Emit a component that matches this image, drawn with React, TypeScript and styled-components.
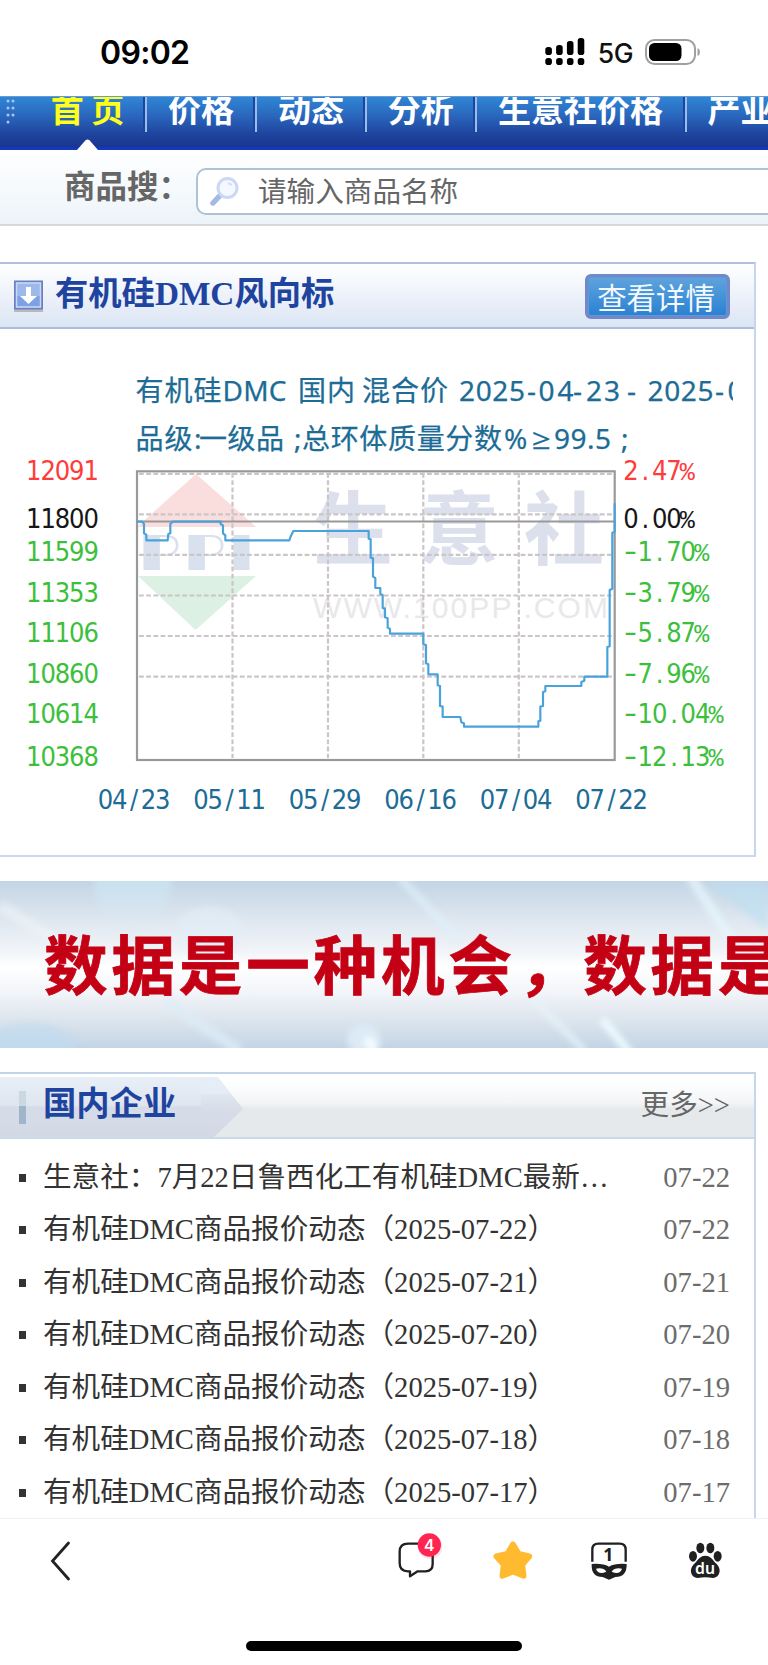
import React from "react";
import styled, { createGlobalStyle } from "styled-components";

const cjk = `"Noto Sans CJK SC", sans-serif`;
const serif = `"Liberation Serif", ${cjk}`;

const GlobalStyle = createGlobalStyle`
  * { box-sizing: border-box; }
  body { margin: 0; background: #fff; font-family: ${cjk}; }
  ul { margin: 0; padding: 0; list-style: none; }
  h2 { margin: 0; }
  svg { display: block; }
`;

const Screen = styled.div`
  width: 768px;
  height: 1665px;
  display: flex;
  flex-direction: column;
  overflow: hidden;
  background: #fff;
`;

const StatusBar = styled.header`
  flex: none;
  height: 96px;
  padding: 8px 67px 0 100px;
  display: flex;
  align-items: center;
`;

const Clock = styled.span`
  flex: 1;
  margin-top: 2px;
  font: 600 32px/40px Inter, sans-serif;
  letter-spacing: -0.7px;
  color: #000;
`;

const Network = styled.span`
  margin: 2px 12px 0 13px;
  font: 500 26.5px/34px Inter, sans-serif;
  letter-spacing: -0.5px;
  color: #111;
`;

const NavBar = styled.nav`
  flex: none;
  position: relative;
  height: 54px;
  display: flex;
  overflow: hidden;
  background: linear-gradient(#2f86d6 0%, #2a67bd 35%, #1f469f 68%, #1a358f 94%, #1238c4 96%);
  border-top: 1px solid #6a9bd0;
`;

const Grip = styled.svg`
  flex: none;
  width: 30px;
  height: 53px;
`;

const NavItem = styled.a<{ $width: number; $active?: boolean }>`
  flex: none;
  width: ${(p) => p.$width}px;
  height: 35px;
  border-right: 2px solid #9cbce6;
  box-shadow: inset -2px 0 0 #1746a8;
  text-align: center;
  white-space: nowrap;
  font: 700 33px/40px ${cjk};
  color: ${(p) => (p.$active ? "#ffff1a" : "#fff")};

  span {
    display: block;
    margin-top: -9px;
  }
`;

const ActiveMark = styled.svg`
  position: absolute;
  left: 77px;
  bottom: 0;
`;

const SearchBar = styled.section`
  flex: none;
  height: 76px;
  display: flex;
  align-items: flex-start;
  padding: 18px 0 0 64px;
  overflow: hidden;
  background: linear-gradient(#fff, #ecf4f9);
  border-bottom: 2px solid #d6d9db;
`;

const SearchLabel = styled.label`
  flex: none;
  width: 132px;
  margin-top: -2px;
  white-space: nowrap;
  font: 700 31.5px/36px ${cjk};
  color: #666;
`;

const SearchField = styled.div`
  flex: none;
  width: 600px;
  height: 47px;
  display: flex;
  align-items: center;
  padding-left: 11px;
  gap: 19px;
  border: 2px solid #aec2d6;
  border-radius: 10px;
  background: #fff;
  font: 400 28.6px/40px ${cjk};
  color: #666;

  span {
    margin-top: -4px;
  }
`;

const Card = styled.section<{ $height: number; $top: number; $line: string }>`
  flex: none;
  width: 756px;
  height: ${(p) => p.$height}px;
  margin-top: ${(p) => p.$top}px;
  border-top: 2px solid ${(p) => p.$line};
  border-right: 2px solid #c8d5ee;
`;

const ChartCard = styled(Card)`
  border-bottom: 2px solid #ccd8ee;
`;

const CardHead = styled.div<{ $tone: "blue" | "grey" }>`
  position: relative;
  height: 65px;
  display: flex;
  align-items: center;
  padding-right: 24px;
  border-bottom: 2px solid ${(p) => (p.$tone === "blue" ? "#a9bedb" : "#cbdaea")};
  background: ${(p) =>
    p.$tone === "blue"
      ? "linear-gradient(#fff, #edf2fa 50%, #dbe5f4)"
      : "linear-gradient(#fff 10%, #f3f5f7 45%, #e6e9ec 56%, #e5e9ec)"};
`;

const CardIcon = styled.span`
  margin: 2px 11px 0 14px;
`;

const CardTitle = styled.h2<{ $left: number }>`
  position: relative;
  flex: 1;
  padding-left: ${(p) => p.$left}px;
  margin-top: -3px;
  font: 700 33.3px/44px ${serif};
  color: #1f449f;
`;

const DetailButton = styled.button`
  width: 145px;
  height: 45px;
  margin-top: 1px;
  padding: 0 3px 0 0;
  border: 3px solid #7288c8;
  border-radius: 6px;
  background: linear-gradient(#60a3dc, #4493d8 50%, #2a80d0);
  box-shadow: inset 0 0 0 1px #5a9ada;
  font: 400 29.4px/33px ${cjk};
  white-space: nowrap;
  color: #f4f9ff;
`;

const Banner = styled.section`
  flex: none;
  position: relative;
  height: 167px;
  margin-top: 24px;
  overflow: hidden;
  background: linear-gradient(#c3d5e5, #dde6ef 22%, #f1f4f8 42%, #fff 51%, #f3f5f9 66%, #dde5ed 83%, #c3d5e5);
`;

const BannerLights = styled.svg`
  position: absolute;
  inset: 0;
`;

const BannerText = styled.div`
  position: relative;
  padding: 35px 0 0 44px;
  font: 700 63.5px/90px ${cjk};
  letter-spacing: 3.9px;
  white-space: nowrap;
  color: #c40014;
  -webkit-text-stroke: 0.8px #c40014;
`;

const Comma = styled.span`
  display: inline-block;
  transform: translateX(6px) skewX(-8deg);
`;

const TitleArrow = styled.svg`
  position: absolute;
  left: 0;
  top: 0;
`;

const More = styled.a`
  margin-top: 1px;
  font: 400 28.6px/40px ${serif};
  color: #666;
`;

const NewsList = styled.ul`
  padding: 12.5px 24px 0 19px;
`;

const NewsRow = styled.li`
  height: 52.5px;
  display: flex;
  align-items: center;
  font: 400 28.6px/52px ${serif};
  white-space: nowrap;

  &::before {
    content: "";
    width: 7px;
    height: 8px;
    margin-right: 17px;
    background: #333;
  }
`;

const NewsTitle = styled.span`
  flex: 1;
  color: #333;
`;

const NewsDate = styled.time`
  color: #6c6c6c;
`;

const BottomBar = styled.footer`
  flex: none;
  position: relative;
  height: 147px;
  padding: 12px 37px 0 35px;
  display: flex;
  justify-content: space-between;
  align-items: flex-start;
  border-top: 1px solid #f0f0f0;
  background: #fff;
`;

const ToolGroup = styled.div`
  display: flex;
  gap: 46.5px;

  svg:first-child {
    margin-right: -3px;
  }
`;

const HomeIndicator = styled.div`
  position: absolute;
  left: 246px;
  bottom: 14px;
  width: 276px;
  height: 10px;
  border-radius: 5px;
  background: #000;
`;

const Content = styled.main`
  flex: none;
  height: 1422px;
  display: flex;
  flex-direction: column;
  overflow: hidden;
`;

const STEP = 14.33;
const spread = (start: number, text: string) =>
  Array.from(text).map((_, i) => (start + i * STEP).toFixed(2)).join(" ");

const Cells = styled.text`
  font: 27px "DejaVu Sans Condensed", "DejaVu Sans", sans-serif;
  font-stretch: condensed;
  text-anchor: middle;
`;

function CellText({ x, y, fill, text }: { x: number; y: number; fill: string; text: string }) {
  const percent = text.endsWith("%");
  const negative = text.startsWith("-");
  const body = text.replace(/[-%]/g, "");
  const first = negative ? x + STEP : x;
  return (
    <>
      {negative && (
        <text x={x - 7} y={y - 1} fill={fill} fontSize="27" textLength="13" lengthAdjust="spacingAndGlyphs" fontFamily="DejaVu Sans, sans-serif">-</text>
      )}
      <Cells x={spread(first, body)} y={y} fill={fill}>{body}</Cells>
      {percent && (
        <text x={first + body.length * STEP - 1} y={y} fill={fill} fontSize="25" textAnchor="middle" fontFamily="Liberation Mono, monospace">%</text>
      )}
    </>
  );
}

const GREEN = "#3cc03c";
const levels = [
  { y: 480, price: "12091", pct: "2.47%", color: "#ff3c3c" },
  { y: 527.5, price: "11800", pct: "0.00%", color: "#161616" },
  { y: 560.5, price: "11599", pct: "-1.70%", color: GREEN },
  { y: 601.5, price: "11353", pct: "-3.79%", color: GREEN },
  { y: 642, price: "11106", pct: "-5.87%", color: GREEN },
  { y: 682.5, price: "10860", pct: "-7.96%", color: GREEN },
  { y: 723.2, price: "10614", pct: "-10.04%", color: GREEN },
  { y: 765.7, price: "10368", pct: "-12.13%", color: GREEN },
];
const days = ["04/23", "05/11", "05/29", "06/16", "07/04", "07/22"];

const captions: [string, number, number, number][] = [
  ["有机硅", 135.5, 401, 86],
  ["DMC", 222.5, 401, 64],
  ["国内", 298, 401, 57],
  ["混合价", 362, 401, 86],
  ["2025", 459, 401, 66],
  ["-", 527, 401, 10],
  ["04", 538.5, 401, 35],
  ["-", 573, 401, 10],
  ["23", 586, 401, 34],
  ["-", 627, 401, 10],
  ["2025", 647.5, 401, 66],
  ["-", 715, 401, 10],
  ["0", 727.5, 401, 17],
  ["品级", 135.5, 449, 57],
  [":", 194, 449, 8],
  ["一级品", 199, 449, 85],
  [";", 294, 449, 8],
  ["总环体质量分数", 302, 449, 200],
  ["%", 504, 449, 26],
  ["≥", 532, 449, 19],
  ["99.5", 554, 449, 57],
  [";", 621, 449, 8],
];

const Caption = styled.text`
  font: 28px "Noto Sans", "Open Sans", ${cjk};
  fill: #1c6c96;
  stroke: #1c6c96;
  stroke-width: 0.25px;
`;

function PriceChart() {
  return (
    <svg width="733" height="526" viewBox="0 329 733 526">
      <g>
        <path d="M196 474L256 527H137Z" fill="#fadddd" />
        <path d="M138 576H256L195.500 630Z" fill="#dcf1e3" />
        <g fill="#d9e0ee">
          <text x="152 197 236" y="570" fontFamily="Lato" fontWeight="300" fontSize="49">PPI</text>
          <rect x="143.500" y="535" width="16" height="35" />
          <rect x="188.500" y="535" width="16" height="35" />
          <rect x="233.500" y="535" width="16" height="35" />
        </g>
        <text x="313 419 524" y="558" fontFamily="Noto Sans CJK SC" fontWeight="700" fontSize="80" fill="#dbe0ec">生意社</text>
        <text x="313" y="618" textLength="295" fontFamily="Liberation Sans" fontSize="30" fill="#e8e8ea">WWW.100PP .COM</text>
      </g>
      <g stroke="#cbc5c7" strokeWidth="2.200" strokeDasharray="4.8 2.4" fill="none">
        {[232.5, 328, 423.3, 518.8].map((x) => <path key={x} d={`M${x} 473V758`} />)}
        {[473.8, 514.3, 554.8, 595.5, 636, 676.7].map((y) => <path key={y} d={`M139 ${y}H614`} />)}
      </g>
      <path d="M137 521.500H614.500" stroke="#999" strokeWidth="2.200" />
      <rect x="137" y="471.300" width="477.700" height="288.700" fill="none" stroke="#999" strokeWidth="2.200" />
      <g transform="translate(0 450) scale(.333333)">
        <path
          fill="none"
          stroke="#48a2dc"
          strokeWidth="6.500"
          strokeLinejoin="round"
          d="M410 215H427L432 222V250L439 254V271H503L505 252L511 250V222L518 215H662L662 222L669 226V250L676 256V271H868L871 262L880 243H1106V266L1112 268V323L1119 325V380L1126 384V414H1141V432L1148 435V474L1155 476V502L1163 505V533L1170 537V551H1270V583L1278 585V640L1285 643V673H1313V706L1320 708V768L1328 770V801H1381L1384 817L1392 820V830H1615V814L1621 812V770L1629 768V726L1636 724V708H1744V696L1753 692V680H1822V591L1829 589V420L1837 416V248L1844 245V160"
        />
      </g>
      {captions.map(([t, x, y, w], i) => (
        <Caption key={i} x={x} y={y} textLength={t.length > 1 || t === "≥" ? w : undefined} lengthAdjust={t === "≥" ? "spacingAndGlyphs" : "spacing"}>{t}</Caption>
      ))}
      {levels.map((l) => (
        <React.Fragment key={l.price}>
          <CellText x={33.8} y={l.y} fill={l.color} text={l.price} />
          <CellText x={631} y={l.y} fill={l.color} text={l.pct} />
        </React.Fragment>
      ))}
      {days.map((d, i) => <CellText key={d} x={105.5 + i * 95.5} y={809} fill="#1c6c96" text={d} />)}
    </svg>
  );
}

const SignalIcon = () => (
  <svg width="40" height="28" viewBox="0 0 40 28">
    {[9, 7, 3, 0].map((y, i) => <rect key={i} x={0.3 + i * 10.8} y={y} width="6.600" height={17 - y} rx="2.800" />)}
    {[0, 1, 2, 3].map((i) => <rect key={i} x={0.3 + i * 10.8} y="20" width="6.600" height="7" rx="2.800" />)}
  </svg>
);

const BatteryIcon = () => (
  <svg width="56" height="26" viewBox="0 0 56 26">
    <rect x="1" y="1" width="49" height="24" rx="8.500" fill="none" stroke="#a0a0a0" strokeWidth="2" />
    <rect x="4" y="4" width="32.500" height="18" rx="5.500" />
    <path d="M52.500 9Q55 10 55 13T52.500 17Z" fill="#a0a0a0" />
  </svg>
);

const SearchIcon = () => (
  <svg width="30" height="32" viewBox="0 0 30 32">
    <path d="M4 27L10.500 20" stroke="#a3b9e6" strokeWidth="5.500" strokeLinecap="round" />
    <circle cx="18.500" cy="12" r="9.500" fill="#f4f8ff" stroke="#cbd7f3" strokeWidth="3" />
    <path d="M19 7l4 2" stroke="#d5e0f7" strokeWidth="2" fill="none" />
  </svg>
);

const DownIcon = () => (
  <svg width="30" height="33" viewBox="0 0 30 33">
    <rect x="0" y="27" width="29" height="5" fill="#b9b8bd" />
    <rect x="1" y="1.500" width="27" height="27" fill="#9db8ea" stroke="#6a80c0" strokeWidth="2" />
    <path d="M3 16H26V27H3Z" fill="#7ea0e4" />
    <rect x="2.500" y="3" width="24" height="24" fill="none" stroke="#c9d8f4" strokeWidth="1.500" />
    <path d="M12 7h5v9h6l-8.500 8L6 16h6Z" fill="#fff" />
  </svg>
);

const BackIcon = () => (
  <svg width="50" height="50" viewBox="0 0 50 50">
    <path d="M33.500 12L17.500 30L33.500 48" fill="none" stroke="#222" strokeWidth="2.800" strokeLinecap="round" />
  </svg>
);

const CommentIcon = () => (
  <svg width="50" height="50" viewBox="45 35 150 150">
    <path d="M84 73H134Q158 73 158 97V134Q158 156 136 156H113L90 171V156H84Q59 156 59 132V97Q59 73 84 73Z" fill="none" stroke="#202020" strokeWidth="7" strokeLinejoin="round" />
    <circle cx="151" cy="83" r="36" fill="#ff2550" opacity=".12" />
    <circle cx="148" cy="77" r="35" fill="#ff2550" />
    <text x="147.500" y="94" textAnchor="middle" fontFamily="Inter" fontWeight="600" fontSize="47" fill="#fff">4</text>
  </svg>
);

const StarIcon = () => (
  <svg width="50" height="50" viewBox="323 35 150 150">
    <path d="M398 75L415 103L447 111L426 136L430 170L398 157L366 170L370 136L348 111L381 103Z" fill="#ffba30" stroke="#ffba30" strokeWidth="17" strokeLinejoin="round" />
  </svg>
);

const MaskIcon = () => (
  <svg width="50" height="50" viewBox="615 35 150 150">
    <path d="M637 127V91Q637 73 655 73H719Q737 73 737 91V127" fill="none" stroke="#202020" strokeWidth="7" />
    <text x="685" y="124" textAnchor="middle" fontFamily="Noto Sans" fontWeight="700" fontSize="53" fill="#202020">1</text>
    <path d="M635 134Q668 131 687 142Q706 131 740 134Q741 173 706 173L687 181L668 173Q633 173 635 134Z" fill="#202020" />
    <path d="M648 148Q670 144 679 157Q655 168 648 148ZM726 148Q704 144 695 157Q719 168 726 148Z" fill="#fff" />
  </svg>
);

const PawIcon = () => (
  <svg width="50" height="50" viewBox="904 35 150 150">
    <g fill="#202020">
      <ellipse cx="962" cy="86" rx="12" ry="16" />
      <ellipse cx="992" cy="86" rx="12" ry="16" />
      <ellipse cx="940" cy="111" rx="12" ry="16" />
      <ellipse cx="1014" cy="111" rx="12" ry="16" />
      <path d="M977 109C994 109 999 123 1011 134C1028 150 1019 176 1000 176Q989 174 977 174Q965 174 954 176C934 176 926 150 943 134C955 123 960 109 977 109Z" />
    </g>
    <text x="976" y="165" textAnchor="middle" textLength="60" lengthAdjust="spacingAndGlyphs" fontFamily="Noto Sans" fontWeight="600" fontSize="50" fill="#fff">du</text>
  </svg>
);

const news = [
  ["生意社：7月22日鲁西化工有机硅DMC最新…", "07-22"],
  ...["22", "21", "20", "19", "18", "17"].map((d) => [`有机硅DMC商品报价动态（2025-07-${d}）`, `07-${d}`]),
];

export default function App() {
  return (
    <Screen>
      <GlobalStyle />
      <StatusBar>
        <Clock>09:02</Clock>
        <SignalIcon />
        <Network>5G</Network>
        <BatteryIcon />
      </StatusBar>
      <Content>
        <NavBar>
          <Grip viewBox="0 0 30 53">
            {[4, 11, 18].map((y) => [8, 13].map((x) => <circle key={`${x}-${y}`} cx={x} cy={y} r="1.500" fill="#a9c6ee" />))}
            <circle cx="8" cy="25" r="1.500" fill="#a9c6ee" />
          </Grip>
          <NavItem $width={117} $active><span>首 页</span></NavItem>
          <NavItem $width={110}><span>价格</span></NavItem>
          <NavItem $width={110}><span>动态</span></NavItem>
          <NavItem $width={109.5}><span>分析</span></NavItem>
          <NavItem $width={210}><span>生意社价格</span></NavItem>
          <NavItem $width={110}><span>产业</span></NavItem>
          <ActiveMark width="21" height="11" viewBox="0 0 21 11"><path d="M0 11L8.500 1.200Q10.500 0 12.500 1.200L21 11Z" fill="#fff" /></ActiveMark>
        </NavBar>
        <SearchBar>
          <SearchLabel>商品搜：</SearchLabel>
          <SearchField><SearchIcon /><span>请输入商品名称</span></SearchField>
        </SearchBar>

        <ChartCard $height={595} $top={36} $line="#afc1dc">
          <CardHead $tone="blue">
            <CardIcon><DownIcon /></CardIcon>
            <CardTitle $left={0}>有机硅DMC风向标</CardTitle>
            <DetailButton>查看详情</DetailButton>
          </CardHead>
          <PriceChart />
        </ChartCard>

        <Banner>
          <BannerLights width="768" height="167" viewBox="0 0 768 167">
            <defs>
              <filter id="soft"><feGaussianBlur stdDeviation="3" /></filter>
              <linearGradient id="fade" x2="0" y2="1"><stop stopColor="#bfe2f3" /><stop offset="1" stopColor="#dceaf4" stopOpacity=".3" /></linearGradient>
            </defs>
            <g filter="url(#soft)">
              <ellipse cx="133" cy="5" rx="39" ry="38" fill="url(#fade)" />
              <ellipse cx="210" cy="50" rx="34" ry="25" fill="#e2eff8" opacity=".6" />
              <ellipse cx="30" cy="172" rx="48" ry="30" fill="#c0dcf0" opacity=".7" />
              <ellipse cx="364" cy="158" rx="17" ry="16" fill="#dceaf5" />
              <path d="M0 25L60 62" stroke="#eff4f9" strokeWidth="12" opacity=".6" />
              <path d="M400-3L460 60" stroke="#dff1fa" strokeWidth="7" opacity=".8" />
              <path d="M690-5L732 60" stroke="#e6f5fc" strokeWidth="10" opacity=".8" />
              <path d="M165 120L240 170" stroke="#deedf7" strokeWidth="11" opacity=".8" />
              <path d="M530 115L585 170" stroke="#e6f4fb" strokeWidth="7" opacity=".8" />
              <path d="M602 138L630 172" stroke="#eef9ff" strokeWidth="8" />
              <path d="M366 157L376 170" stroke="#f4fcff" strokeWidth="9" />
              <path d="M705 0H768V50Z" fill="#bcdff2" opacity=".6" />
            </g>
          </BannerLights>
          <BannerText>数据是一种机会<Comma>，</Comma>数据是</BannerText>
        </Banner>

        <Card $height={460} $top={24} $line="#c3d4e9">
          <CardHead $tone="grey">
            <TitleArrow width="245" height="63" viewBox="0 0 245 63">
              <defs>
                <linearGradient id="tab" x2="0" y2="1">
                  <stop stopColor="#e9eff7" />
                  <stop offset=".48" stopColor="#dfe5ef" />
                  <stop offset=".5" stopColor="#d6dce7" />
                  <stop offset="1" stopColor="#d2d9e6" />
                </linearGradient>
                <linearGradient id="tip" x2="0" y2="1">
                  <stop stopColor="#e6eef8" />
                  <stop offset=".27" stopColor="#e4ecf6" />
                  <stop offset=".3" stopColor="#e0e6ee" />
                  <stop offset=".6" stopColor="#d6dce7" />
                  <stop offset="1" stopColor="#d2d9e6" />
                </linearGradient>
              </defs>
              <path d="M0 3H201V63H0Z" fill="url(#tab)" />
              <path d="M201 3H218L243 35L214 63H201Z" fill="url(#tip)" />
              <rect x="19" y="17" width="7" height="15" fill="#cbd8e2" />
              <rect x="19" y="32" width="7" height="18" fill="#9fb5c9" />
            </TitleArrow>
            <CardTitle $left={43}>国内企业</CardTitle>
            <More>更多&gt;&gt;</More>
          </CardHead>
          <NewsList>
            {news.map(([title, date], i) => (
              <NewsRow key={i}>
                <NewsTitle>{title}</NewsTitle>
                <NewsDate>{date}</NewsDate>
              </NewsRow>
            ))}
          </NewsList>
        </Card>
      </Content>

      <BottomBar>
        <BackIcon />
        <ToolGroup>
          <CommentIcon />
          <StarIcon />
          <MaskIcon />
          <PawIcon />
        </ToolGroup>
        <HomeIndicator />
      </BottomBar>
    </Screen>
  );
}
